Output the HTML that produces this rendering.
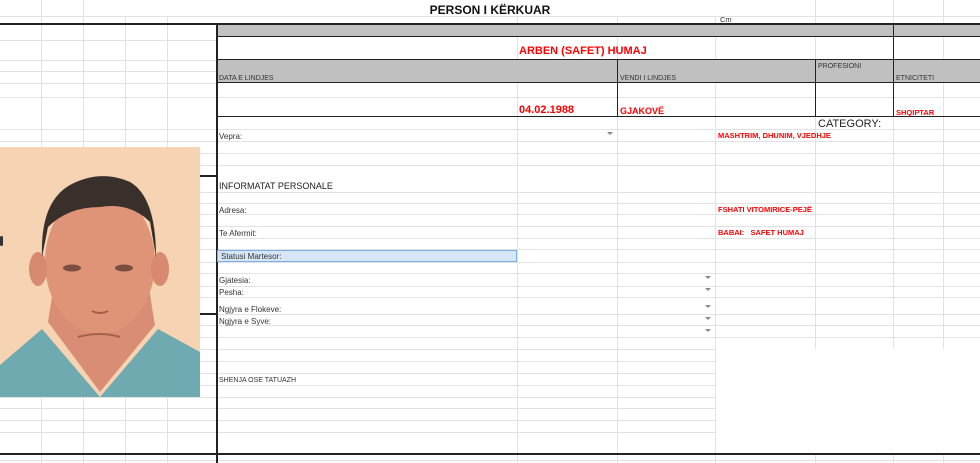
<!DOCTYPE html>
<html><head><meta charset="utf-8"><style>
*{margin:0;padding:0;box-sizing:border-box}
body{width:980px;height:463px;overflow:hidden;background:#fff;position:relative;font-family:"Liberation Sans",Arial,sans-serif}
.h{position:absolute;height:1px;background:#e2e2e2}
.v{position:absolute;width:1px;background:#e2e2e2}
.bh{position:absolute;height:2px;background:#222}
.bv{position:absolute;width:2px;background:#222}
.g{position:absolute;background:#c0c0c0}
.t{position:absolute;font-size:8px;color:#333;white-space:nowrap;line-height:1}
.r{position:absolute;color:#f00;font-weight:bold;white-space:nowrap;line-height:1}
.dd{position:absolute;width:0;height:0;border-left:3px solid transparent;border-right:3px solid transparent;border-top:3px solid #888}
</style></head><body>
<div class="h" style="top:16px;left:0;width:980px"></div>
<div class="h" style="top:40px;left:0;width:217px"></div>
<div class="h" style="top:60px;left:0;width:217px"></div>
<div class="h" style="top:71px;left:0;width:217px"></div>
<div class="h" style="top:83px;left:0;width:217px"></div>
<div class="h" style="top:97px;left:0;width:980px"></div>
<div class="h" style="top:129px;left:0;width:980px"></div>
<div class="h" style="top:141px;left:0;width:980px"></div>
<div class="h" style="top:153px;left:0;width:980px"></div>
<div class="h" style="top:165px;left:0;width:980px"></div>
<div class="h" style="top:192px;left:0;width:980px"></div>
<div class="h" style="top:203px;left:0;width:980px"></div>
<div class="h" style="top:214px;left:0;width:980px"></div>
<div class="h" style="top:226px;left:0;width:980px"></div>
<div class="h" style="top:238px;left:0;width:980px"></div>
<div class="h" style="top:249px;left:0;width:980px"></div>
<div class="h" style="top:262px;left:0;width:980px"></div>
<div class="h" style="top:273px;left:0;width:980px"></div>
<div class="h" style="top:286px;left:0;width:980px"></div>
<div class="h" style="top:297px;left:0;width:980px"></div>
<div class="h" style="top:314px;left:0;width:980px"></div>
<div class="h" style="top:325px;left:0;width:980px"></div>
<div class="h" style="top:337px;left:0;width:980px"></div>
<div class="h" style="top:349px;left:0;width:715px"></div>
<div class="h" style="top:361px;left:0;width:715px"></div>
<div class="h" style="top:373px;left:0;width:715px"></div>
<div class="h" style="top:385px;left:0;width:715px"></div>
<div class="h" style="top:397px;left:0;width:715px"></div>
<div class="h" style="top:408px;left:0;width:715px"></div>
<div class="h" style="top:420px;left:0;width:715px"></div>
<div class="h" style="top:432px;left:0;width:715px"></div>
<div class="h" style="top:460px;left:0;width:980px"></div>
<div class="v" style="left:41px;top:0;height:463px"></div>
<div class="v" style="left:83px;top:0;height:463px"></div>
<div class="v" style="left:125px;top:16px;height:447px"></div>
<div class="v" style="left:167px;top:16px;height:447px"></div>
<div class="v" style="left:517px;top:16px;height:447px"></div>
<div class="v" style="left:617px;top:16px;height:447px"></div>
<div class="v" style="left:715px;top:16px;height:447px"></div>
<div class="v" style="left:815px;top:0;height:349px"></div>
<div class="v" style="left:893px;top:0;height:349px"></div>
<div class="v" style="left:943px;top:0;height:349px"></div>
<div class="v" style="left:815px;top:454px;height:9px"></div>
<div class="v" style="left:893px;top:454px;height:9px"></div>
<div class="v" style="left:943px;top:454px;height:9px"></div>
<div class="g" style="left:217px;top:25px;width:763px;height:12px"></div>
<div class="g" style="left:217px;top:60px;width:763px;height:23px"></div>
<div class="bh" style="top:23px;left:0;width:980px"></div>
<div class="bh" style="top:36px;left:217px;width:763px;height:1px"></div>
<div class="bh" style="top:59px;left:217px;width:763px;height:1px"></div>
<div class="bh" style="top:82px;left:217px;width:763px;height:1px"></div>
<div class="bh" style="top:116px;left:217px;width:763px;height:1px"></div>
<div class="bv" style="left:216px;top:23px;height:440px"></div>
<div class="bv" style="left:893px;top:23px;height:37px;width:1px"></div>
<div class="bv" style="left:617px;top:59px;height:58px;width:1px"></div>
<div class="bv" style="left:815px;top:59px;height:58px;width:1px"></div>
<div class="bv" style="left:893px;top:59px;height:58px;width:1px"></div>
<div class="bh" style="top:175px;left:200px;width:17px"></div>
<div class="bh" style="top:313px;left:200px;width:17px"></div>
<div class="bh" style="top:453px;left:0;width:980px"></div>
<svg style="position:absolute;left:0;top:147px" width="200" height="250" viewBox="0 0 200 250">
<rect width="200" height="250" fill="#f6d3b3"/>
<path d="M0 218 L42 182 L100 250 L158 182 L200 205 L200 250 L0 250Z" fill="#6eaab0"/>
<path d="M48 175 Q52 150 55 130 L148 130 Q150 150 155 178 L100 245 Z" fill="#d98d74"/>
<ellipse cx="100" cy="115" rx="55" ry="72" fill="#df9478"/>
<ellipse cx="38" cy="122" rx="9" ry="17" fill="#d88a70"/>
<ellipse cx="160" cy="122" rx="9" ry="17" fill="#d88a70"/>
<path d="M42 110 Q40 55 70 38 Q100 22 130 35 Q156 50 156 110 L150 75 Q130 55 100 60 Q68 60 48 80Z" fill="#3a302b"/>
<ellipse cx="72" cy="121" rx="9" ry="3.5" fill="#7a4d3e"/>
<ellipse cx="124" cy="121" rx="9" ry="3.5" fill="#7a4d3e"/>
<path d="M92 164 Q100 168 108 164" stroke="#a5604d" stroke-width="2" fill="none"/>
<path d="M78 190 Q100 184 120 190" stroke="#a5604d" stroke-width="2" fill="none"/>
</svg>
<div style="position:absolute;left:0;top:236px;width:3px;height:10px;background:#333;border-radius:2px"></div>
<div style="position:absolute;left:0;width:980px;top:3px;text-align:center;font-weight:bold;font-size:12px;color:#111">PERSON I KËRKUAR</div>
<div class="t" style="left:720px;top:16px;font-size:7.5px">Cm</div>
<div class="r" style="left:519px;top:46px;font-size:11px">ARBEN (SAFET) HUMAJ</div>
<div class="t" style="left:219px;top:75px;font-size:7px">DATA E LINDJES</div>
<div class="t" style="left:620px;top:75px;font-size:7px">VENDI I LINDJES</div>
<div class="t" style="left:818px;top:63px;font-size:7px">PROFESIONI</div>
<div class="t" style="left:896px;top:75px;font-size:7px">ETNICITETI</div>
<div class="r" style="left:519px;top:105px;font-size:11px">04.02.1988</div>
<div class="r" style="left:620px;top:107px;font-size:9px">GJAKOVË</div>
<div class="r" style="left:896px;top:109px;font-size:7.5px">SHQIPTAR</div>
<div class="t" style="left:818px;top:119px;font-size:11px;color:#222">CATEGORY:</div>
<div class="t" style="left:219px;top:133px">Vepra:</div>
<div class="dd" style="left:607px;top:132px"></div>
<div class="r" style="left:718px;top:132px;font-size:7.5px">MASHTRIM, DHUNIM, VJEDHJE</div>
<div class="t" style="left:219px;top:182px;font-size:9px;color:#222">INFORMATAT PERSONALE</div>
<div class="t" style="left:219px;top:207px">Adresa:</div>
<div class="r" style="left:718px;top:206px;font-size:7.5px">FSHATI VITOMIRICE-PEJË</div>
<div class="t" style="left:219px;top:230px">Te Afermit:</div>
<div class="r" style="left:718px;top:229px;font-size:7.5px">BABAI: &nbsp; SAFET HUMAJ</div>
<div style="position:absolute;left:217px;top:250px;width:300px;height:12px;background:#d6e6f7;border:1px solid #7aaee6"></div>
<div class="t" style="left:221px;top:253px">Statusi Martesor:</div>
<div class="t" style="left:219px;top:277px">Gjatesia:</div>
<div class="t" style="left:219px;top:289px">Pesha:</div>
<div class="t" style="left:219px;top:306px">Ngjyra e Flokeve:</div>
<div class="t" style="left:219px;top:318px">Ngjyra e Syve:</div>
<div class="dd" style="left:705px;top:276px"></div>
<div class="dd" style="left:705px;top:288px"></div>
<div class="dd" style="left:705px;top:305px"></div>
<div class="dd" style="left:705px;top:317px"></div>
<div class="dd" style="left:705px;top:329px"></div>
<div class="t" style="left:219px;top:377px;font-size:7px">SHENJA OSE TATUAZH</div>
</body></html>
